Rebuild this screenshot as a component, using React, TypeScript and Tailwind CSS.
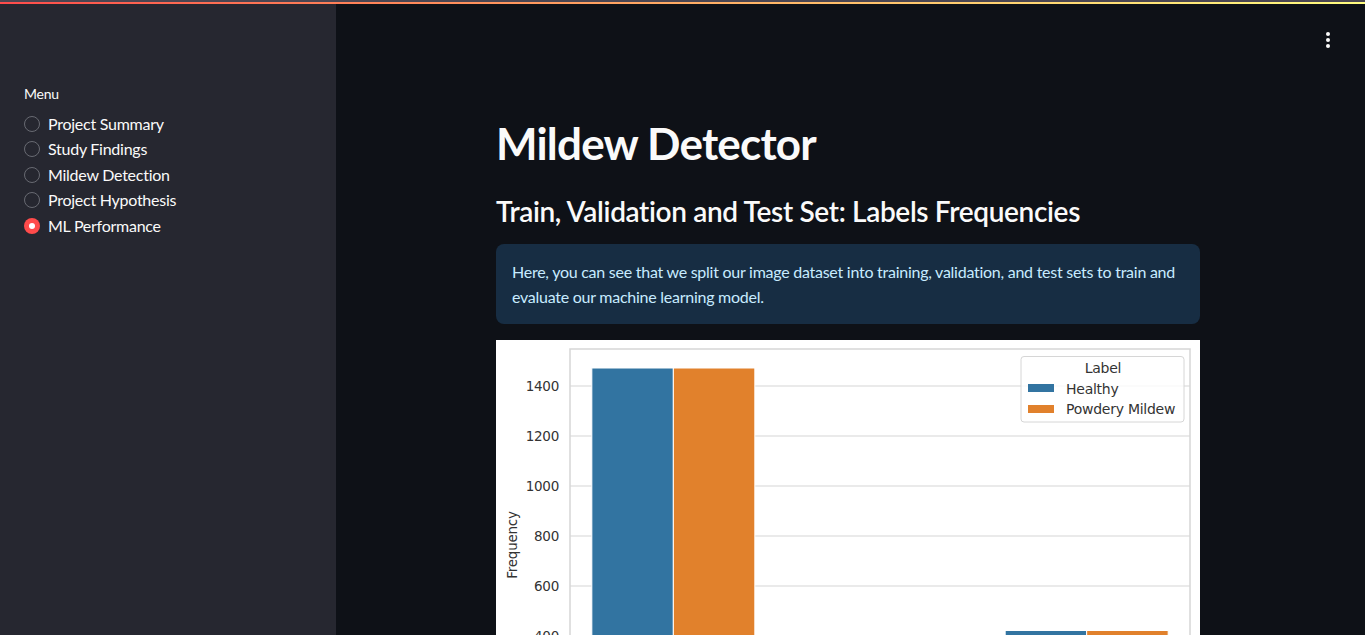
import { useState } from "react";

const menuItems = [
  "Project Summary",
  "Study Findings",
  "Mildew Detection",
  "Project Hypothesis",
  "ML Performance",
];

const sans = "font-['Source_Sans_Pro','Lato','Noto_Sans',sans-serif]";

// chart geometry (px inside the figure)
const plotLeft = 74;
const plotRight = 694;
const plotTop = 9;
const baseY = 396;
const scale = 0.25; // px per count

const sets = [
  { name: "train", healthy: 1472, mildew: 1472 },
  { name: "validation", healthy: 210, mildew: 210 },
  { name: "test", healthy: 422, mildew: 422 },
];

const LabelsChart = () => {
  const catW = (plotRight - plotLeft) / sets.length;
  const barW = 81.5;
  return (
    <svg width="704" height="440" viewBox="0 0 704 440" className="block">
      <rect x="0" y="0" width="704" height="440" fill="#ffffff" />
      {[0, 200, 400, 600, 800, 1000, 1200, 1400].map((v) => {
        const y = baseY - v * scale;
        return (
          <g key={v}>
            <line x1={plotLeft} x2={plotRight} y1={y} y2={y} stroke="#d6d6d6" strokeWidth="1.2" />
            <text
              x="63"
              y={y + 4.5}
              textAnchor="end"
              fontSize="13.5"
              fill="#333333"
              fontFamily="DejaVu Sans, sans-serif"
            >
              {v}
            </text>
          </g>
        );
      })}
      {sets.map((s, i) => {
        const cx = plotLeft + catW * i + catW / 2;
        return (
          <g key={s.name}>
            <rect
              x={cx - barW}
              y={baseY - s.healthy * scale}
              width={barW}
              height={s.healthy * scale}
              fill="#3274a1"
              stroke="#ffffff"
              strokeWidth="1"
            />
            <rect
              x={cx}
              y={baseY - s.mildew * scale}
              width={barW}
              height={s.mildew * scale}
              fill="#e1812c"
              stroke="#ffffff"
              strokeWidth="1"
            />
          </g>
        );
      })}
      <rect
        x={plotLeft}
        y={plotTop}
        width={plotRight - plotLeft}
        height={baseY - plotTop}
        fill="none"
        stroke="#d6d6d6"
        strokeWidth="1.5"
      />
      <text
        x="0"
        y="0"
        transform="translate(21 205) rotate(-90)"
        textAnchor="middle"
        fontSize="13.5"
        fill="#333333"
        fontFamily="DejaVu Sans, sans-serif"
      >
        Frequency
      </text>
      {/* legend */}
      <rect x="525" y="16.5" width="163" height="65.5" rx="3" fill="#ffffff" fillOpacity="0.8" stroke="#d6d6d6" />
      <text x="607" y="33" textAnchor="middle" fontSize="14" fill="#333333" fontFamily="DejaVu Sans, sans-serif">
        Label
      </text>
      <rect x="532" y="44" width="26" height="8" fill="#3274a1" />
      <text x="570" y="53.5" fontSize="14" fill="#333333" fontFamily="DejaVu Sans, sans-serif">
        Healthy
      </text>
      <rect x="532" y="65" width="26" height="8" fill="#e1812c" />
      <text x="570" y="74" fontSize="14" fill="#333333" fontFamily="DejaVu Sans, sans-serif">
        Powdery Mildew
      </text>
    </svg>
  );
};

export default function App() {
  const [active, setActive] = useState("ML Performance");

  return (
    <div className={`h-[635px] w-full overflow-hidden flex flex-col bg-[#0e1117] tracking-[-0.016em] ${sans}`}>
      {/* decoration line */}
      <div className="h-[2px] w-full bg-[#4a4652] shrink-0" />
      <div className="h-[2px] w-full bg-gradient-to-r from-[#ff4b4b] to-[#fffd80] shrink-0" />
      <div className="flex flex-1 min-h-0">
        <aside className="w-[336px] shrink-0 bg-[#262730] px-6 pt-[79px]">
          <div className="text-[14px] leading-[22px] text-[#fafafa]">Menu</div>
          <div className="flex flex-col mt-[6px]">
            {menuItems.map((item) => {
              const on = active === item;
              return (
                <button
                  key={item}
                  onClick={() => setActive(item)}
                  className="flex items-center gap-2 h-[25.5px] text-left"
                >
                  {on ? (
                    <span className="w-4 h-4 rounded-full bg-[#ff4b4b] flex items-center justify-center">
                      <span className="w-[6px] h-[6px] rounded-full bg-white" />
                    </span>
                  ) : (
                    <span className="w-4 h-4 rounded-full border border-[#686a72]" />
                  )}
                  <span className="text-[16px] text-[#fafafa]">{item}</span>
                </button>
              );
            })}
          </div>
        </aside>

        <main className="flex-1 min-w-0 relative">
          <button className="absolute right-[31px] top-[24px] flex flex-col gap-[2px] items-center p-1">
            <span className="w-[4px] h-[4px] rounded-full bg-[#fafafa]" />
            <span className="w-[4px] h-[4px] rounded-full bg-[#fafafa]" />
            <span className="w-[4px] h-[4px] rounded-full bg-[#fafafa]" />
          </button>

          <div className="w-[704px] ml-[160px] pt-[109px]">
            <h1 className="text-[44px] leading-[60px] font-bold text-[#fafafa] tracking-[-0.8px]">
              Mildew Detector
            </h1>
            <h2 className="mt-[18px] text-[28px] leading-[40px] font-semibold text-[#fafafa] tracking-[-0.34px]">
              Train, Validation and Test Set: Labels Frequencies
            </h2>
            <div className="mt-[13px] rounded-lg bg-[#172d43] px-4 py-[15px] text-[16px] leading-[25px] text-[#c7ebff]">
              Here, you can see that we split our image dataset into training, validation, and test sets to train and
              evaluate our machine learning model.
            </div>
            <div className="mt-4">
              <LabelsChart />
            </div>
          </div>
        </main>
      </div>
    </div>
  );
}
